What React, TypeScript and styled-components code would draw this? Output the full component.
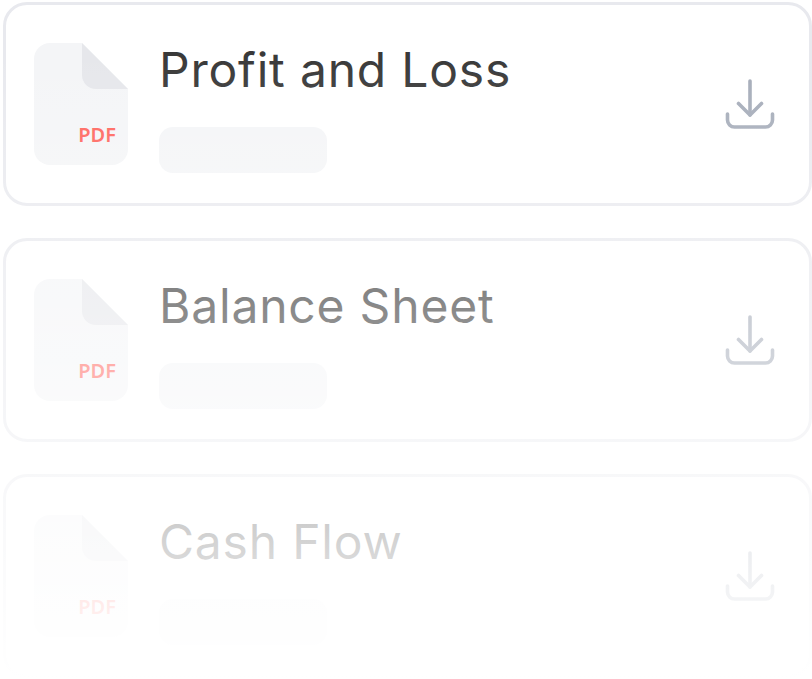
import styled, { createGlobalStyle } from "styled-components";

const reports = ["Profit and Loss", "Balance Sheet", "Cash Flow"];

const GlobalStyle = createGlobalStyle`
  html, body {
    margin: 0;
    padding: 0;
    background: #fff;
    overflow: hidden;
  }
`;

const FileIcon = () => {
  return (
    <FileBox>
      <svg width="94" height="122" viewBox="0 0 94 122">
        <path
          d="M16 0H48L94 46V106a16 16 0 0 1-16 16H16a16 16 0 0 1-16-16V16A16 16 0 0 1 16 0Z"
          fill="#f4f5f7"
        />
        <path d="M48 0L94 46H62a14 14 0 0 1-14-14Z" fill="#e6e7eb" />
      </svg>
      <PdfLabel>PDF</PdfLabel>
    </FileBox>
  );
};

const DownloadIcon = () => {
  return (
    <svg width="50" height="52" viewBox="0 0 50 52" fill="none" stroke="#a4abb8" strokeWidth="3.6" strokeLinecap="round" strokeLinejoin="round">
      <path d="M25 3V37" />
      <path d="M13.5 25.5L25 37L36.5 25.5" />
      <path d="M2.5 36V42a7 7 0 0 0 7 7H40.500a7 7 0 0 0 7-7V36" />
    </svg>
  );
};

function App() {
  return (
    <>
      <GlobalStyle />
      <Page>
        {reports.map((name) => (
          <Card key={name}>
            <FileIcon />
            <CardText>
              <Title>{name}</Title>
              <Pill />
            </CardText>
            <DownloadIcon />
          </Card>
        ))}
        <Fade />
      </Page>
    </>
  );
}

const Page = styled.div`
  position: relative;
  display: flex;
  flex-direction: column;
  gap: 32px;
  box-sizing: border-box;
  width: 812px;
  height: 679px;
  padding: 2px 0 0 3px;
  overflow: hidden;
  background: #fff;
`;

const Card = styled.div`
  flex: none;
  display: flex;
  align-items: center;
  box-sizing: border-box;
  width: 809px;
  height: 204px;
  padding: 0 34px 0 28px;
  background: #fff;
  border: 3px solid #e8e9ee;
  border-radius: 24px;
`;

const FileBox = styled.div`
  position: relative;
  flex: none;
  width: 94px;
  height: 122px;

  svg {
    display: block;
  }
`;

const PdfLabel = styled.span`
  position: absolute;
  right: 12px;
  bottom: 18px;
  color: #ff5f57;
  font-family: "Noto Sans", sans-serif;
  font-size: 20px;
  font-weight: 600;
  line-height: 24px;
`;

const CardText = styled.div`
  flex: 1;
  display: flex;
  flex-direction: column;
  align-items: flex-start;
  align-self: flex-start;
  gap: 28px;
  padding: 36px 0 0 31px;
`;

const Title = styled.div`
  height: 58px;
  color: #383838;
  font-family: Inter, "Open Sans", sans-serif;
  font-size: 48px;
  font-weight: 400;
  letter-spacing: 0.8px;
  line-height: 58px;
  white-space: nowrap;
`;

const Pill = styled.div`
  width: 168px;
  height: 46px;
  background: #f4f5f7;
  border-radius: 14px;
`;

const Fade = styled.div`
  position: absolute;
  inset: 0;
  background: linear-gradient(to bottom, rgba(255, 255, 255, 0) 50px, #fff 680px);
  pointer-events: none;
`;

export default App;
